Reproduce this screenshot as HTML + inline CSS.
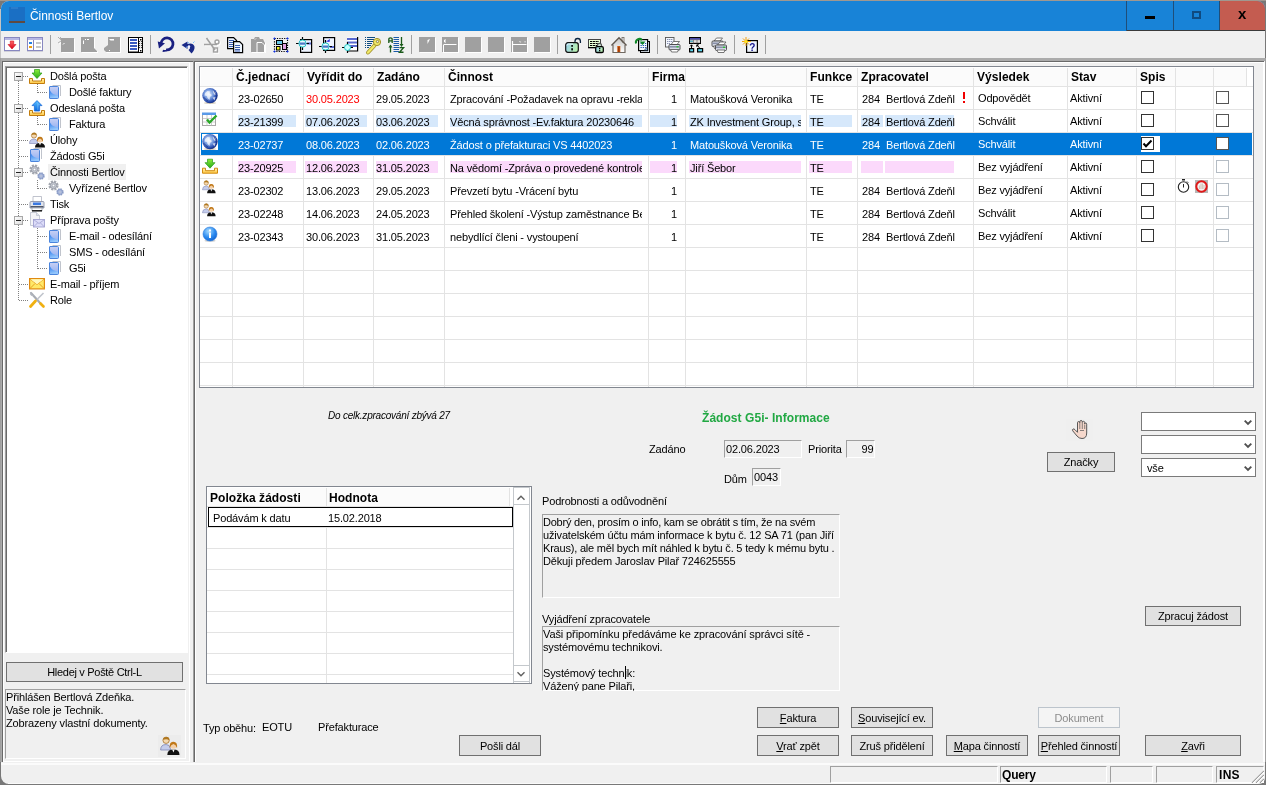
<!DOCTYPE html><html><head><meta charset="utf-8"><title>Činnosti Bertlov</title><style>
*{box-sizing:border-box;margin:0;padding:0}
html,body{width:1266px;height:785px;overflow:hidden}
body{position:relative;background:linear-gradient(#a09890 0,#a09890 1px,#787878 1px);font-family:"Liberation Sans",sans-serif;font-size:11px;color:#000;letter-spacing:-0.15px}
.a{position:absolute}
.t{position:absolute;white-space:nowrap;line-height:13px;height:13px}
.b{font-weight:bold;font-size:12px;letter-spacing:0.05px}
.btn{position:absolute;background:#e1e1e1;border:1px solid #707070;text-align:center;line-height:13px;white-space:nowrap}
.btn span{position:absolute;left:0;right:0;top:3px}
u{text-decoration:underline;text-underline-offset:1px}
.fld{position:absolute;background:#f0f0f0;border:1px solid;border-color:#a0a0a0 #fff #fff #a0a0a0}
.hl{position:absolute;height:1px;background:#e3e3e3}
.vl{position:absolute;width:1px;background:#e3e3e3}
</style></head><body><div id="root" style="position:absolute;left:0;top:0;width:1266px;height:785px;will-change:transform">
<div class="a" style="left:1px;top:1px;width:1264px;height:783px;background:#f0f0f0;border-radius:8px 8px 6px 8px;overflow:hidden"></div>
<div class="a" style="left:8px;top:783px;width:1250px;height:1px;background:#fafafa"></div>
<div class="a" style="left:1px;top:1px;width:1264px;height:30px;background:#1883d7;border-radius:8px 8px 0 0"></div>
<div class="a" style="left:1px;top:58px;width:1264px;height:3px;background:#ababab"></div>
<div class="a" style="left:2px;top:61px;width:1262px;height:1px;background:#696969"></div>
<div class="a" style="left:3px;top:62px;width:1260px;height:1px;background:#fff"></div>
<div class="a" style="left:0px;top:58px;width:1px;height:704px;background:#a0a0a0"></div>
<div class="a" style="left:1px;top:58px;width:1px;height:704px;background:#ababab"></div>
<div class="a" style="left:2px;top:61px;width:1px;height:701px;background:#696969"></div>
<div class="a" style="left:3px;top:62px;width:1px;height:700px;background:#fff"></div>
<div class="a" style="left:1265px;top:58px;width:1px;height:704px;background:#a0a0a0"></div>
<div class="a" style="left:1263px;top:62px;width:2px;height:700px;background:#fff"></div>
<div class="a" style="left:0px;top:9px;width:1px;height:49px;background:#c4c4c4"></div>
<div class="a" style="left:3px;top:761px;width:187px;height:1px;background:#fff"></div>
<svg class="a" style="left:9px;top:6px" width="17" height="18" viewBox="0 0 17 18"><rect x="0" y="1" width="16" height="14" fill="#1a6fc4"/><rect x="0" y="15" width="16" height="2" fill="#5f4a42"/><rect x="2" y="1" width="7" height="2" fill="#2a7ccc"/></svg>
<div class="t" style="left:30px;top:9px;color:#fff;font-size:12px;line-height:15px;height:15px;letter-spacing:-0.05px">Činnosti Bertlov</div>
<div class="a" style="left:1126px;top:1px;width:1px;height:30px;background:#1f4e79"></div>
<div class="a" style="left:1173px;top:1px;width:1px;height:30px;background:#1f4e79"></div>
<div class="a" style="left:1219px;top:1px;width:1px;height:30px;background:#1f4e79"></div>
<div class="a" style="left:1127px;top:30px;width:138px;height:1px;background:#3b3b3b"></div>
<div class="a" style="left:1220px;top:1px;width:45px;height:29px;background:#c45c50;border-radius:0 8px 0 0"></div>
<div class="a" style="left:1145px;top:16px;width:10px;height:3px;background:#000"></div>
<div class="a" style="left:1192px;top:11px;width:9px;height:8px;border:2px solid #0f4a80;background:#1883d7"></div>
<div class="t b" style="left:1238px;top:6px;font-size:15px;line-height:16px;height:16px;letter-spacing:0">x</div>
<div class="a" style="left:50px;top:35px;width:1px;height:19px;background:#a0a0a0"></div>
<div class="a" style="left:150px;top:35px;width:1px;height:19px;background:#a0a0a0"></div>
<div class="a" style="left:411px;top:35px;width:1px;height:19px;background:#a0a0a0"></div>
<div class="a" style="left:557px;top:35px;width:1px;height:19px;background:#a0a0a0"></div>
<div class="a" style="left:657px;top:35px;width:1px;height:19px;background:#a0a0a0"></div>
<div class="a" style="left:734px;top:35px;width:1px;height:19px;background:#a0a0a0"></div>
<div class="a" style="left:765px;top:35px;width:1px;height:19px;background:#a0a0a0"></div>
<svg class="a" style="left:4px;top:37px;overflow:visible" width="16" height="16" viewBox="0 0 16 16"><defs><linearGradient id="ra" x1="0" y1="0" x2="0" y2="1"><stop offset="0" stop-color="#ff6a6a"/><stop offset="1" stop-color="#d80018"/></linearGradient></defs>
<rect x="0" y="14" width="16" height="1" fill="#d0d0d8"/><rect x="0.5" y="0.5" width="15" height="13" fill="#fff" stroke="#8888c0"/><rect x="1" y="1" width="14" height="2" fill="#b8b8e4"/><path d="M6.300 4h3.400v3.500h2.300L8 12 4 7.500h2.300z" fill="url(#ra)" stroke="#d01020" stroke-width="0.6"/></svg>
<svg class="a" style="left:27px;top:37px;overflow:visible" width="16" height="16" viewBox="0 0 16 16"><rect x="0" y="14" width="16" height="1" fill="#d0d0d8"/><rect x="0.5" y="0.5" width="15" height="13" fill="#fff" stroke="#8888c0"/><rect x="1" y="1" width="14" height="2" fill="#b8b8e4"/><rect x="6" y="3" width="1" height="10" fill="#8888c0"/><rect x="2" y="5" width="3" height="2" fill="#2880e0"/><rect x="2" y="9" width="3" height="2" fill="#f0a010"/><rect x="9" y="5" width="5" height="2" fill="#c8c8c8"/><rect x="9" y="9" width="5" height="2" fill="#c8c8c8"/></svg>
<svg class="a" style="left:58px;top:37px;overflow:visible" width="16" height="16" viewBox="0 0 16 16"><g transform="translate(1,1)" fill="#fff" stroke="#fff"><rect x="3" y="1" width="13" height="14" stroke="none"/><path d="M0 0l3 3M0 6l3-2M2.5 0v2" fill="none" stroke-width="0.8"/></g><g fill="#a0a0a0" stroke="#a0a0a0"><rect x="3" y="1" width="13" height="14" stroke="none"/><path d="M0 0l3 3M0 6l3-2M2.5 0v2" fill="none" stroke-width="0.8"/></g><path d="M5 7.5l1.5-1.5" stroke="#fff" stroke-width="1"/></svg>
<svg class="a" style="left:81px;top:37px;overflow:visible" width="16" height="16" viewBox="0 0 16 16"><g transform="translate(1,1)" fill="#fff" stroke="#fff"><path d="M0 0h13v11l3 3v1H0z" stroke="none"/></g><g fill="#a0a0a0" stroke="#a0a0a0"><path d="M0 0h13v11l3 3v1H0z" stroke="none"/></g><path d="M2.5 7v-3.5M4 2.5h1M6 2.5h2" stroke="#fff" stroke-width="1" fill="none"/></svg>
<svg class="a" style="left:104px;top:37px;overflow:visible" width="16" height="16" viewBox="0 0 16 16"><g transform="translate(1,1)" fill="#fff" stroke="#fff"><path d="M4 0h12v15H2l-2-2v-2l4-3z" stroke="none"/></g><g fill="#a0a0a0" stroke="#a0a0a0"><path d="M4 0h12v15H2l-2-2v-2l4-3z" stroke="none"/></g><path d="M5 2h5v1.5H6.5z" fill="#fff"/><rect x="5" y="13" width="1" height="1" fill="#fff"/></svg>
<svg class="a" style="left:127px;top:37px;overflow:visible" width="16" height="16" viewBox="0 0 16 16"><rect x="1.500" y="0.500" width="14" height="15" fill="#fff" stroke="#000"/><rect x="1" y="14.500" width="15" height="1.500" fill="#000"/><g fill="#3a5cc0"><rect x="3" y="2" width="7" height="2"/><rect x="3" y="5" width="7" height="2"/><rect x="3" y="8" width="7" height="2"/><rect x="3" y="11" width="7" height="2"/></g><rect x="11.500" y="0.500" width="4" height="15" fill="#e8e8e8" stroke="#000"/><path d="M12 4.500h3M12 6.500h3M12 8.500h3M12 10.500h3" stroke="#444" stroke-width="1" stroke-dasharray="1,1"/><rect x="12" y="1" width="3" height="3" fill="#fff"/><rect x="12" y="12" width="3" height="3" fill="#fff"/><rect x="13" y="2" width="1.500" height="1.500" fill="#000"/><rect x="13" y="13" width="1.500" height="1.500" fill="#000"/></svg>
<svg class="a" style="left:158px;top:37px;overflow:visible" width="16" height="16" viewBox="0 0 16 16"><path d="M3 7A6 6 0 1 1 8 12.800" fill="none" stroke="#1a2080" stroke-width="2.700"/><path d="M4.500 15Q9 15 12.500 11.500Q9 13.600 5 12.800z" fill="#1a2080"/><path d="M-0.300 4.500l7.300 1.700L1 11.500z" fill="#1a2080"/></svg>
<svg class="a" style="left:181px;top:37px;overflow:visible" width="16" height="16" viewBox="0 0 16 16"><path d="M0.5 8L6.5 4.5V7Q12 5.5 13.5 9.5Q14 13 10.5 16.5L7.5 13Q10 11 8.5 10Q7.5 9.5 6.5 10V12z" fill="#1a2a88"/><path d="M7 5l1 1.5M12 6l1.5-1.5M5 10.5l1.5-1" stroke="#7ac0ff" stroke-width="1"/><circle cx="8" cy="9.5" r="1.2" fill="#eef"/></svg>
<svg class="a" style="left:204px;top:37px;overflow:visible" width="16" height="16" viewBox="0 0 16 16"><g transform="translate(1,1)" fill="#fff" stroke="#fff"><path d="M2.5 1L11 13M0 7.5h13" fill="none" stroke-width="1.6"/><circle cx="13" cy="5" r="2" fill="none" stroke-width="1.4"/><rect x="9.5" y="11" width="4" height="4" fill="none" stroke-width="1.4"/></g><g fill="#a0a0a0" stroke="#a0a0a0"><path d="M2.5 1L11 13M0 7.5h13" fill="none" stroke-width="1.6"/><circle cx="13" cy="5" r="2" fill="none" stroke-width="1.4"/><rect x="9.5" y="11" width="4" height="4" fill="none" stroke-width="1.4"/></g></svg>
<svg class="a" style="left:227px;top:37px;overflow:visible" width="16" height="16" viewBox="0 0 16 16"><path d="M0.6 0.6h6l3 3v8h-9z" fill="#eef6ff" stroke="#000" stroke-width="1.2"/><path d="M2 3.5h5M2 5.5h5M2 7.5h5M2 9.5h5" stroke="#3a5cb0" stroke-width="1"/><path d="M6.6 4.6h6l3 3v8h-9z" fill="#eef6ff" stroke="#000" stroke-width="1.2"/><path d="M8 8.5h5M8 10.5h5M8 12.5h5M8 14h5" stroke="#3a5cb0" stroke-width="1"/></svg>
<svg class="a" style="left:250px;top:37px;overflow:visible" width="16" height="16" viewBox="0 0 16 16"><g transform="translate(1,1)" fill="#fff" stroke="#fff"><path d="M1 2h3l1-2h4l1 2h3l2 4v9H1z" stroke="none"/></g><g fill="#a0a0a0" stroke="#a0a0a0"><path d="M1 2h3l1-2h4l1 2h3l2 4v9H1z" stroke="none"/></g><path d="M7 5.5h5l2.5 2.5v7.5H7z" fill="#a0a0a0" stroke="#fff" stroke-width="1"/><path d="M5 2.5l1-1" stroke="#fff"/></svg>
<svg class="a" style="left:273px;top:37px;overflow:visible" width="16" height="16" viewBox="0 0 16 16"><rect x="1.5" y="1.5" width="13" height="13" fill="none" stroke="#000" stroke-width="1.2" stroke-dasharray="1.2,1.2"/><g fill="#1030e0"><path d="M1.500 0.200l1.300 1.300-1.300 1.300-1.300-1.300z"/><path d="M14.500 0.200l1.300 1.300-1.300 1.300-1.300-1.300z"/><path d="M1.500 13.200l1.300 1.300-1.300 1.300-1.300-1.300z"/><path d="M14.500 13.200l1.300 1.300-1.300 1.300-1.300-1.300z"/></g><rect x="3.5" y="3.5" width="6" height="4" fill="#68c8e8" stroke="#000"/><rect x="9.5" y="6.5" width="4" height="6" fill="#e0a0e0" stroke="#000"/><rect x="3.5" y="9.5" width="3.5" height="3.5" fill="#f0f020" stroke="#000"/></svg>
<svg class="a" style="left:296px;top:37px;overflow:visible" width="16" height="16" viewBox="0 0 16 16"><rect x="4.6" y="2.6" width="11" height="12.8" fill="#eef4ff" stroke="#000" stroke-width="1.2"/><rect x="11" y="5.5" width="4" height="2" fill="#5a6ad0"/><path d="M6.5 0v13M0 6.5h13" stroke="#000" stroke-width="1.2"/><circle cx="6.5" cy="6.5" r="3.6" fill="#e8ffff" stroke="#20c8c8" stroke-width="1"/><rect x="3.5" y="5.5" width="6" height="2.2" fill="#4a78c8"/></svg>
<svg class="a" style="left:319px;top:37px;overflow:visible" width="16" height="16" viewBox="0 0 16 16"><rect x="4.6" y="0.6" width="11" height="12.8" fill="#eef4ff" stroke="#000" stroke-width="1.2"/><rect x="11" y="9" width="4" height="2" fill="#5a6ad0"/><path d="M7 4.5l4-2.5-0.5 3z" fill="#3030e0"/><path d="M6.5 3v13M0 9.5h13" stroke="#000" stroke-width="1.2"/><circle cx="6.5" cy="9.5" r="3.6" fill="#e8ffff" stroke="#20c8c8" stroke-width="1"/><rect x="3.5" y="8.5" width="6" height="2.2" fill="#4a78c8"/></svg>
<svg class="a" style="left:342px;top:37px;overflow:visible" width="16" height="16" viewBox="0 0 16 16"><rect x="5" y="0.5" width="10.5" height="13" fill="#fff"/><path d="M15.6 0v14H5" fill="none" stroke="#000" stroke-width="1.2"/><g fill="#5a6ad0"><rect x="5" y="1" width="10" height="2"/><rect x="5" y="4.5" width="10" height="2"/><rect x="5" y="8" width="10" height="2"/></g><path d="M5.5 5v11M0 10.5h11" stroke="#000" stroke-width="1.2"/><circle cx="5.5" cy="10.5" r="3" fill="#c8ffff" stroke="#20c8c8"/></svg>
<svg class="a" style="left:365px;top:37px;overflow:visible" width="16" height="16" viewBox="0 0 16 16"><path d="M0.5 0v11" stroke="#104a80" stroke-width="1" stroke-dasharray="1,1"/><path d="M2 0.500h8M2 2.500h7M2 4.500h6M2 6.500h5M2 8.500h4M2 10.500h2" stroke="#104a80" stroke-width="1"/><path d="M3 15.5L9.5 8.5" stroke="#a09028" stroke-width="4" stroke-linecap="round"/><path d="M3 15.5L9.5 8.5" stroke="#f0e868" stroke-width="2.4" stroke-linecap="round"/><circle cx="12" cy="5" r="3.6" fill="#f0e868" stroke="#a09028" stroke-width="1"/><circle cx="12.5" cy="4.5" r="1.2" fill="#eee" stroke="#807020" stroke-width="0.8"/></svg>
<svg class="a" style="left:388px;top:37px;overflow:visible" width="16" height="16" viewBox="0 0 16 16"><g stroke="#1a5a1a" fill="none" stroke-width="1.3"><path d="M0.8 6V2.5Q0.8 0.8 2.5 0.8Q4.2 0.8 4.2 2.5V6M0.8 3.8h3.4"/><path d="M2.5 15.5V8.5"/><path d="M13.5 0v8"/><path d="M11.5 10.6h4l-4 4.6h4" stroke-width="1.4"/></g><path d="M0.5 10.5l2-3 2 3z" fill="#1a5a1a"/><path d="M11.5 7l2 3 2-3z" fill="#1a5a1a"/><path d="M5.5 0.5h5.5M5.5 2.5h5.5M5.5 4.5h5.5M5.5 6.5h5.5M5.5 8.5h5.5M5.5 10.5h5.5M5.5 12.5h5.5M5.5 14.5h5.5" stroke="#1a5aa8" stroke-width="1"/></svg>
<svg class="a" style="left:419px;top:37px;overflow:visible" width="16" height="16" viewBox="0 0 16 16"><rect x="1" y="1" width="16" height="15" fill="#fff"/><rect x="0" y="0" width="16" height="15" fill="#a0a0a0"/><path d="M8.5 3v4l2.5-5z" fill="#fff"/></svg>
<svg class="a" style="left:442px;top:37px;overflow:visible" width="16" height="16" viewBox="0 0 16 16"><rect x="1" y="1" width="16" height="15" fill="#fff"/><rect x="0" y="0" width="16" height="15" fill="#a0a0a0"/><path d="M1.5 15V8M1.5 7.5h13" stroke="#fff" stroke-width="1" fill="none"/><path d="M4 3H2.5v2H4" stroke="#fff" stroke-width="1" fill="none"/></svg>
<svg class="a" style="left:465px;top:37px;overflow:visible" width="16" height="16" viewBox="0 0 16 16"><rect x="1" y="1" width="16" height="15" fill="#fff"/><rect x="0" y="0" width="16" height="15" fill="#a0a0a0"/></svg>
<svg class="a" style="left:488px;top:37px;overflow:visible" width="16" height="16" viewBox="0 0 16 16"><rect x="1" y="1" width="16" height="15" fill="#fff"/><rect x="0" y="0" width="16" height="15" fill="#a0a0a0"/></svg>
<svg class="a" style="left:511px;top:37px;overflow:visible" width="16" height="16" viewBox="0 0 16 16"><rect x="1" y="1" width="16" height="15" fill="#fff"/><rect x="0" y="0" width="16" height="15" fill="#a0a0a0"/><path d="M1.5 15V4M1.5 7.5h14" stroke="#fff" stroke-width="1.2" fill="none"/><path d="M8 4l1 1.5 1.5-0.5zM13 5l1.5-1v1.5z" fill="#fff"/></svg>
<svg class="a" style="left:534px;top:37px;overflow:visible" width="16" height="16" viewBox="0 0 16 16"><rect x="1" y="1" width="16" height="15" fill="#fff"/><rect x="0" y="0" width="16" height="15" fill="#a0a0a0"/></svg>
<svg class="a" style="left:565px;top:37px;overflow:visible" width="16" height="16" viewBox="0 0 16 16"><defs><linearGradient id="pg1" x1="0" y1="0" x2="1" y2="0.3"><stop offset="0" stop-color="#98d0f0"/><stop offset="1" stop-color="#b8f0b0"/></linearGradient></defs><path d="M10 7V4.200A2.700 2.700 0 0 1 15.400 4.200V6" fill="none" stroke="#0a2440" stroke-width="1.300"/><rect x="0.700" y="5.700" width="12.600" height="9.600" rx="2.200" fill="url(#pg1)" stroke="#111" stroke-width="1.200"/><path d="M2 8.500Q2 7 3.500 7H8" stroke="#e8f8ff" stroke-width="1" fill="none"/><rect x="6.300" y="8" width="1.600" height="1.800" fill="#000"/><rect x="6.300" y="11.200" width="1.600" height="2.200" fill="#000"/></svg>
<svg class="a" style="left:588px;top:37px;overflow:visible" width="16" height="16" viewBox="0 0 16 16"><defs><linearGradient id="pg2" x1="0" y1="0" x2="1" y2="0.3"><stop offset="0" stop-color="#98d0f0"/><stop offset="1" stop-color="#b8f0b0"/></linearGradient></defs><rect x="0.5" y="2.5" width="12" height="8" fill="#e8ffd8" stroke="#444" stroke-width="1"/><rect x="0" y="10" width="9" height="1.3" fill="#000"/><path d="M2 4.5h9M2 6.5h9M2 8.5h7" stroke="#000" stroke-width="1.2" stroke-dasharray="2.2,0.6"/><path d="M9.5 10V8.3A2 2 0 0 1 13.5 8.3V10" fill="#cfe8d8" stroke="#555" stroke-width="1.2"/><rect x="7.7" y="9.7" width="7.6" height="5.8" rx="1.3" fill="url(#pg2)" stroke="#000" stroke-width="1.3"/><rect x="11" y="10.8" width="1.3" height="1.3" fill="#000"/><rect x="11" y="12.8" width="1.3" height="1.5" fill="#000"/></svg>
<svg class="a" style="left:611px;top:37px;overflow:visible" width="16" height="16" viewBox="0 0 16 16"><defs><linearGradient id="hg" x1="0" y1="0" x2="0" y2="1"><stop offset="0" stop-color="#c8c8c8"/><stop offset="1" stop-color="#fff"/></linearGradient></defs><rect x="11" y="0.5" width="2" height="5" fill="#eee" stroke="#706860" stroke-width="0.8"/><path d="M2 8.5L8 1.5l6 7V15.5H2z" fill="url(#hg)"/><path d="M0.5 8.5L8 0.8l7.5 7.7" fill="none" stroke="#605850" stroke-width="1.5"/><path d="M2 8v7.5h12V8" fill="none" stroke="#706860" stroke-width="1.2"/><rect x="6.3" y="9" width="3" height="6" fill="#d05a10"/><rect x="7" y="10" width="1.5" height="5" fill="#a03c08"/></svg>
<svg class="a" style="left:634px;top:37px;overflow:visible" width="16" height="16" viewBox="0 0 16 16"><rect x="6.5" y="4.5" width="9" height="11" fill="#eaf4ff" stroke="#000" stroke-width="1"/><rect x="4.6" y="2.6" width="9" height="11" fill="#f4faff" stroke="#000" stroke-width="1.2"/><path d="M6.5 6.5h6M6.5 8.5h6M6.5 10.5h6" stroke="#2858b0" stroke-width="1.2" stroke-dasharray="1.3,0.9"/><path d="M10 13.5l3.5-3.5v3.5z" fill="#88b8e8" stroke="#000" stroke-width="0.6"/><path d="M2 6.5A3.6 3.6 0 0 1 8 3" fill="none" stroke="#108828" stroke-width="2"/><path d="M5.5 4.5h6L8.5 8z" fill="#108828"/></svg>
<svg class="a" style="left:665px;top:37px;overflow:visible" width="16" height="16" viewBox="0 0 16 16"><rect x="0.5" y="0.5" width="8.5" height="9.5" fill="#f4f8ff" stroke="#555" stroke-width="0.9"/><path d="M2 2.5h6M2 4.5h6M2 6.5h3" stroke="#8890b0" stroke-width="1" stroke-dasharray="1.4,0.6"/><g transform="translate(3.5,4)"><path d="M2.5 3.5L5 0.5h6L8.5 3.5z" fill="#fff" stroke="#555" stroke-width="0.8"/><path d="M0.5 4.5Q0.5 3.5 1.5 3.5h9Q11.5 3.5 11.5 4.5V8Q11.5 9 10.5 9h-9Q0.5 9 0.5 8z" fill="#d8dce8" stroke="#444" stroke-width="0.9"/><rect x="1" y="5" width="10" height="1.6" fill="#8890a8"/><rect x="8" y="5.2" width="2" height="1.2" fill="#20d020"/><path d="M2 8.5h8L9 11H3z" fill="#fff" stroke="#555" stroke-width="0.8"/></g></svg>
<svg class="a" style="left:688px;top:37px;overflow:visible" width="16" height="16" viewBox="0 0 16 16"><rect x="1.5" y="0.5" width="11" height="6" fill="#fff" stroke="#000" stroke-width="1"/><rect x="2" y="1" width="10" height="1.8" fill="#4848a8"/><rect x="2" y="3.5" width="3" height="1.5" fill="#58c8e0"/><path d="M1.5 3h11M1.500 5.200h11M5.500 3v3.500M9 3v3.500" stroke="#555" stroke-width="0.6"/><rect x="1.600" y="11.600" width="4" height="3.300" fill="#60d8f0" stroke="#000" stroke-width="1.200"/><rect x="9.600" y="11.600" width="5" height="3.300" fill="#60d8f0" stroke="#000" stroke-width="1.200"/><path d="M3.500 11.500V8M2.300 9.300l1.200-1.500 1.200 1.500M12 11.500L9 8M8.800 9.800V7.800h2" fill="none" stroke="#000" stroke-width="1"/></svg>
<svg class="a" style="left:711px;top:37px;overflow:visible" width="16" height="16" viewBox="0 0 16 16"><g transform="translate(0.5,0.5)"><path d="M2.5 3.5L5 0.5h6L8.5 3.5z" fill="#fff" stroke="#555" stroke-width="0.8"/><path d="M0.5 4.5Q0.5 3.5 1.5 3.5h9Q11.5 3.5 11.5 4.5V8Q11.5 9 10.5 9h-9Q0.5 9 0.5 8z" fill="#d8dce8" stroke="#444" stroke-width="0.9"/><rect x="1" y="5" width="10" height="1.6" fill="#8890a8"/><rect x="8" y="5.2" width="2" height="1.2" fill="#20d020"/><path d="M2 8.5h8L9 11H3z" fill="#fff" stroke="#555" stroke-width="0.8"/></g><g transform="translate(4,4.5)"><path d="M2.5 3.5L5 0.5h6L8.5 3.5z" fill="#fff" stroke="#555" stroke-width="0.8"/><path d="M0.5 4.5Q0.5 3.5 1.5 3.5h9Q11.5 3.5 11.5 4.5V8Q11.5 9 10.5 9h-9Q0.5 9 0.5 8z" fill="#d8dce8" stroke="#444" stroke-width="0.9"/><rect x="1" y="5" width="10" height="1.6" fill="#8890a8"/><rect x="8" y="5.2" width="2" height="1.2" fill="#20d020"/><path d="M2 8.5h8L9 11H3z" fill="#fff" stroke="#555" stroke-width="0.8"/></g></svg>
<svg class="a" style="left:742px;top:37px;overflow:visible" width="16" height="16" viewBox="0 0 16 16"><rect x="4.600" y="3.600" width="10.800" height="11.800" fill="#f0f6ff" stroke="#000" stroke-width="1.200"/><path d="M4 0v9M0 4.500h9M1 1.500l6 6M7 1.500l-6 6" stroke="#f0a010" stroke-width="1"/><circle cx="4" cy="4.500" r="1.600" fill="#ffe820"/><text x="7.300" y="13.500" font-family="Liberation Sans" font-weight="bold" font-size="10" fill="#10108a">?</text></svg>
<div class="a" style="left:5px;top:66px;width:183px;height:587px;background:#fff;border:1px solid;border-color:#a0a0a0 #fff #fff #a0a0a0;box-shadow:inset 1px 1px 0 #696969"></div>
<div class="a" style="left:189px;top:62px;width:1px;height:700px;background:#fff"></div>
<div class="a" style="left:190px;top:62px;width:3px;height:700px;background:#f0f0f0"></div>
<div class="a" style="left:193px;top:61px;width:1px;height:701px;background:#a0a0a0"></div>
<div class="a" style="left:194px;top:61px;width:1px;height:701px;background:#696969"></div>
<div class="a" style="left:195px;top:62px;width:1px;height:700px;background:#fff"></div>
<svg width="0" height="0" style="position:absolute"><defs>
<linearGradient id="docg" x1="0" y1="0" x2="0.300" y2="1"><stop offset="0" stop-color="#2e7eee"/><stop offset="1" stop-color="#96c8fc"/></linearGradient><linearGradient id="docp" x1="0" y1="0" x2="0" y2="1"><stop offset="0" stop-color="#c8d0f4"/><stop offset="1" stop-color="#8cacf0"/></linearGradient>
<linearGradient id="grn" x1="0" y1="0" x2="0" y2="1"><stop offset="0" stop-color="#8aee3a"/><stop offset="1" stop-color="#28a818"/></linearGradient>
<linearGradient id="blu" x1="0" y1="0" x2="0" y2="1"><stop offset="0" stop-color="#58c0ff"/><stop offset="1" stop-color="#0868e0"/></linearGradient>
<linearGradient id="tray" x1="0" y1="0" x2="0" y2="1"><stop offset="0" stop-color="#fff0b0"/><stop offset="1" stop-color="#ffc840"/></linearGradient>
</defs></svg>
<div class="a" style="left:18px;top:81px;width:1px;height:220px;background-image:repeating-linear-gradient(180deg,#808080 0,#808080 1px,transparent 1px,transparent 2px)"></div>
<div class="t " style="left:50px;top:70px;">Došlá pošta</div>
<div class="a" style="left:23px;top:76px;width:5px;height:1px;background-image:repeating-linear-gradient(90deg,#808080 0,#808080 1px,transparent 1px,transparent 2px)"></div>
<div class="a" style="left:14px;top:72px;width:9px;height:9px;background:linear-gradient(135deg,#fff,#dcdcdc);border:1px solid #a8a8a8"></div>
<div class="a" style="left:16px;top:76px;width:5px;height:1px;background:#222"></div>
<svg class="a" style="left:29px;top:68px;overflow:visible" width="16" height="16" viewBox="0 0 16 16"><path d="M0.500 10.500h3v2.500h9v-2.500h3v5h-15z" fill="url(#tray)" stroke="#c27c0c" stroke-width="1"/><path d="M5.500 1.500h5v3.500h2.500l-5 5.500-5-5.500h2.500z" fill="url(#grn)" stroke="#2a9a18" stroke-width="0.700"/></svg>
<div class="t " style="left:69px;top:86px;">Došlé faktury</div>
<div class="a" style="left:38px;top:92px;width:10px;height:1px;background-image:repeating-linear-gradient(90deg,#808080 0,#808080 1px,transparent 1px,transparent 2px)"></div>
<svg class="a" style="left:49px;top:85px;overflow:visible" width="12" height="15" viewBox="0 0 12 15"><path d="M3.500 0.500h8v10.500" fill="#fff" stroke="#c0c4cc"/><path d="M0.500 2q0-0.500 0.500-0.500h7.500q1 0 1 1v10q0 1-1 1h-7.500q-0.500 0-0.500-0.500z" fill="url(#docp)" stroke="#4a84dc" stroke-width="1"/><path d="M1 5.500Q2.500 9.500 9 10.500V13H1z" fill="url(#docg)"/></svg>
<div class="t " style="left:50px;top:102px;">Odeslaná pošta</div>
<div class="a" style="left:23px;top:108px;width:5px;height:1px;background-image:repeating-linear-gradient(90deg,#808080 0,#808080 1px,transparent 1px,transparent 2px)"></div>
<div class="a" style="left:14px;top:104px;width:9px;height:9px;background:linear-gradient(135deg,#fff,#dcdcdc);border:1px solid #a8a8a8"></div>
<div class="a" style="left:16px;top:108px;width:5px;height:1px;background:#222"></div>
<svg class="a" style="left:29px;top:100px;overflow:visible" width="16" height="16" viewBox="0 0 16 16"><path d="M0.500 10.500h3v2.500h9v-2.500h3v5h-15z" fill="url(#tray)" stroke="#c27c0c" stroke-width="1"/><path d="M8 0.600L13 5.600H10.600V11H5.400V5.600H3z" fill="url(#blu)" stroke="#1a6ad8" stroke-width="0.800"/><path d="M8 2L11 5H9.500V10H8z" fill="#fff" opacity="0.180"/></svg>
<div class="t " style="left:69px;top:118px;">Faktura</div>
<div class="a" style="left:38px;top:124px;width:10px;height:1px;background-image:repeating-linear-gradient(90deg,#808080 0,#808080 1px,transparent 1px,transparent 2px)"></div>
<svg class="a" style="left:49px;top:117px;overflow:visible" width="12" height="15" viewBox="0 0 12 15"><path d="M3.500 0.500h8v10.500" fill="#fff" stroke="#c0c4cc"/><path d="M0.500 2q0-0.500 0.500-0.500h7.500q1 0 1 1v10q0 1-1 1h-7.500q-0.500 0-0.500-0.500z" fill="url(#docp)" stroke="#4a84dc" stroke-width="1"/><path d="M1 5.500Q2.500 9.500 9 10.500V13H1z" fill="url(#docg)"/></svg>
<div class="t " style="left:50px;top:134px;">Úlohy</div>
<div class="a" style="left:19px;top:140px;width:9px;height:1px;background-image:repeating-linear-gradient(90deg,#808080 0,#808080 1px,transparent 1px,transparent 2px)"></div>
<svg class="a" style="left:29px;top:132px;overflow:visible" width="16" height="16" viewBox="0 0 16 16"><circle cx="5" cy="3.500" r="2.600" fill="#f4d8b0" stroke="#a06820" stroke-width="0.600"/><path d="M2.500 3Q3 0.300 6 0.800Q8 1.500 7.500 3.500Q6 2 2.500 3z" fill="#b07820"/><path d="M0.500 11.500Q0.500 7 5 7Q8 7 8.500 10v1.500z" fill="#c4ccec" stroke="#7880b0" stroke-width="0.600"/><circle cx="11" cy="8" r="2.500" fill="#f4d0a8"/><path d="M8 10Q7.500 4.500 11 4.800Q14.500 4.800 14 10Q13 7 11 6.500Q9 7 8 10z" fill="#c07818"/><path d="M6 15.500Q6 11 11 11Q16 11 16 15.500z" fill="#101010"/><path d="M10 11l1 2.500 1-2.500z" fill="#fff"/></svg>
<div class="t " style="left:50px;top:150px;">Žádosti G5i</div>
<div class="a" style="left:19px;top:156px;width:9px;height:1px;background-image:repeating-linear-gradient(90deg,#808080 0,#808080 1px,transparent 1px,transparent 2px)"></div>
<svg class="a" style="left:30px;top:148px;overflow:visible" width="12" height="15" viewBox="0 0 12 15"><path d="M3.500 0.500h8v10.500" fill="#fff" stroke="#c0c4cc"/><path d="M0.500 2q0-0.500 0.500-0.500h7.500q1 0 1 1v10q0 1-1 1h-7.500q-0.500 0-0.500-0.500z" fill="url(#docp)" stroke="#4a84dc" stroke-width="1"/><path d="M1 5.500Q2.500 9.500 9 10.500V13H1z" fill="url(#docg)"/></svg>
<div class="a" style="left:48px;top:164px;width:78px;height:16px;background:#f0f0f0"></div>
<div class="t " style="left:50px;top:166px;">Činnosti Bertlov</div>
<div class="a" style="left:23px;top:172px;width:5px;height:1px;background-image:repeating-linear-gradient(90deg,#808080 0,#808080 1px,transparent 1px,transparent 2px)"></div>
<div class="a" style="left:14px;top:168px;width:9px;height:9px;background:linear-gradient(135deg,#fff,#dcdcdc);border:1px solid #a8a8a8"></div>
<div class="a" style="left:16px;top:172px;width:5px;height:1px;background:#222"></div>
<svg class="a" style="left:29px;top:164px;overflow:visible" width="16" height="16" viewBox="0 0 16 16"><circle cx="5.500" cy="5.500" r="3.600" fill="none" stroke="#a4a8b0" stroke-width="3" stroke-dasharray="1.900,0.930"/><circle cx="5.500" cy="5.500" r="3.200" fill="#c4c8d0" stroke="#9498a4" stroke-width="0.800"/><circle cx="5.500" cy="5.500" r="1.300" fill="#fff" stroke="#8890a0" stroke-width="0.600"/><circle cx="12" cy="12" r="2.600" fill="none" stroke="#8ea0c8" stroke-width="2.200" stroke-dasharray="1.400,0.640"/><circle cx="12" cy="12" r="2.400" fill="#b8c8e8" stroke="#8090c0" stroke-width="0.800"/><circle cx="12" cy="12" r="1" fill="#fff" stroke="#7080b0" stroke-width="0.500"/></svg>
<div class="t " style="left:69px;top:182px;">Vyřízené Bertlov</div>
<div class="a" style="left:38px;top:188px;width:10px;height:1px;background-image:repeating-linear-gradient(90deg,#808080 0,#808080 1px,transparent 1px,transparent 2px)"></div>
<svg class="a" style="left:48px;top:180px;overflow:visible" width="16" height="16" viewBox="0 0 16 16"><circle cx="5.500" cy="5.500" r="3.600" fill="none" stroke="#a4a8b0" stroke-width="3" stroke-dasharray="1.900,0.930"/><circle cx="5.500" cy="5.500" r="3.200" fill="#c4c8d0" stroke="#9498a4" stroke-width="0.800"/><circle cx="5.500" cy="5.500" r="1.300" fill="#fff" stroke="#8890a0" stroke-width="0.600"/><circle cx="12" cy="12" r="2.600" fill="none" stroke="#8ea0c8" stroke-width="2.200" stroke-dasharray="1.400,0.640"/><circle cx="12" cy="12" r="2.400" fill="#b8c8e8" stroke="#8090c0" stroke-width="0.800"/><circle cx="12" cy="12" r="1" fill="#fff" stroke="#7080b0" stroke-width="0.500"/></svg>
<div class="t " style="left:50px;top:198px;">Tisk</div>
<div class="a" style="left:19px;top:204px;width:9px;height:1px;background-image:repeating-linear-gradient(90deg,#808080 0,#808080 1px,transparent 1px,transparent 2px)"></div>
<svg class="a" style="left:29px;top:196px;overflow:visible" width="16" height="16" viewBox="0 0 16 16"><path d="M4 0.500h8.500v6h-8.500z" fill="#fff" stroke="#b0b4c0" stroke-width="0.800"/><path d="M1 6.500q0-1 1-1h12q1 0 1 1v5.500h-14z" fill="#e0e4ec" stroke="#8088a0" stroke-width="0.800"/><rect x="4" y="6.500" width="8" height="2.500" fill="#3a78e0"/><rect x="1.500" y="10" width="13" height="1.500" fill="#505868"/><path d="M3 12h10v3h-10z" fill="#fff" stroke="#a0a4b0" stroke-width="0.800"/><rect x="3" y="14" width="10" height="1.500" fill="#222"/></svg>
<div class="t " style="left:50px;top:214px;">Příprava pošty</div>
<div class="a" style="left:23px;top:220px;width:5px;height:1px;background-image:repeating-linear-gradient(90deg,#808080 0,#808080 1px,transparent 1px,transparent 2px)"></div>
<div class="a" style="left:14px;top:216px;width:9px;height:9px;background:linear-gradient(135deg,#fff,#dcdcdc);border:1px solid #a8a8a8"></div>
<div class="a" style="left:16px;top:220px;width:5px;height:1px;background:#222"></div>
<svg class="a" style="left:29px;top:212px;overflow:visible" width="16" height="16" viewBox="0 0 16 16"><path d="M1.500 0.500h6l3 3v10h-9z" fill="#f4f4f8" stroke="#c0c4d0" stroke-width="0.900"/><path d="M7.500 0.500v3h3" fill="#e0e4f0" stroke="#c0c4d0" stroke-width="0.800"/><rect x="4.500" y="7.500" width="11" height="7.500" fill="#dcdcf8" stroke="#a0a0d0" stroke-width="0.900"/><path d="M4.500 7.500l5.500 4 5.500-4M4.500 15l4-4M15.500 15l-4-4" fill="none" stroke="#a0a0d0" stroke-width="0.800"/></svg>
<div class="t " style="left:69px;top:230px;">E-mail - odesílání</div>
<div class="a" style="left:38px;top:236px;width:10px;height:1px;background-image:repeating-linear-gradient(90deg,#808080 0,#808080 1px,transparent 1px,transparent 2px)"></div>
<svg class="a" style="left:49px;top:229px;overflow:visible" width="12" height="15" viewBox="0 0 12 15"><path d="M3.500 0.500h8v10.500" fill="#fff" stroke="#c0c4cc"/><path d="M0.500 2q0-0.500 0.500-0.500h7.500q1 0 1 1v10q0 1-1 1h-7.500q-0.500 0-0.500-0.500z" fill="url(#docp)" stroke="#4a84dc" stroke-width="1"/><path d="M1 5.500Q2.500 9.500 9 10.500V13H1z" fill="url(#docg)"/></svg>
<div class="t " style="left:69px;top:246px;">SMS - odesílání</div>
<div class="a" style="left:38px;top:252px;width:10px;height:1px;background-image:repeating-linear-gradient(90deg,#808080 0,#808080 1px,transparent 1px,transparent 2px)"></div>
<svg class="a" style="left:49px;top:245px;overflow:visible" width="12" height="15" viewBox="0 0 12 15"><path d="M3.500 0.500h8v10.500" fill="#fff" stroke="#c0c4cc"/><path d="M0.500 2q0-0.500 0.500-0.500h7.500q1 0 1 1v10q0 1-1 1h-7.500q-0.500 0-0.500-0.500z" fill="url(#docp)" stroke="#4a84dc" stroke-width="1"/><path d="M1 5.500Q2.500 9.500 9 10.500V13H1z" fill="url(#docg)"/></svg>
<div class="t " style="left:69px;top:262px;">G5i</div>
<div class="a" style="left:38px;top:268px;width:10px;height:1px;background-image:repeating-linear-gradient(90deg,#808080 0,#808080 1px,transparent 1px,transparent 2px)"></div>
<svg class="a" style="left:49px;top:261px;overflow:visible" width="12" height="15" viewBox="0 0 12 15"><path d="M3.500 0.500h8v10.500" fill="#fff" stroke="#c0c4cc"/><path d="M0.500 2q0-0.500 0.500-0.500h7.500q1 0 1 1v10q0 1-1 1h-7.500q-0.500 0-0.500-0.500z" fill="url(#docp)" stroke="#4a84dc" stroke-width="1"/><path d="M1 5.500Q2.500 9.500 9 10.500V13H1z" fill="url(#docg)"/></svg>
<div class="t " style="left:50px;top:278px;">E-mail - příjem</div>
<div class="a" style="left:19px;top:284px;width:9px;height:1px;background-image:repeating-linear-gradient(90deg,#808080 0,#808080 1px,transparent 1px,transparent 2px)"></div>
<svg class="a" style="left:29px;top:276px;overflow:visible" width="16" height="16" viewBox="0 0 16 16"><rect x="0.600" y="2.600" width="14.800" height="10.300" fill="#ffe868" stroke="#e08a10" stroke-width="1.200"/><path d="M1 3l7 5.500 7-5.500M1 12.500l5-5M15 12.500l-5-5" fill="none" stroke="#e8a020" stroke-width="1"/><path d="M1.500 3.200l6.500 5 6.500-5z" fill="#fff8c0"/></svg>
<div class="t " style="left:50px;top:294px;">Role</div>
<div class="a" style="left:19px;top:300px;width:9px;height:1px;background-image:repeating-linear-gradient(90deg,#808080 0,#808080 1px,transparent 1px,transparent 2px)"></div>
<svg class="a" style="left:29px;top:292px;overflow:visible" width="16" height="16" viewBox="0 0 16 16"><path d="M2 1l10 11" stroke="#a8acb4" stroke-width="2.200" stroke-linecap="round"/><path d="M1 2.500Q0.500 0.500 3 0.500L2 2l1.500 1.200L5 2Q5 4.500 2.500 4z" fill="#b8bcc4"/><path d="M14.500 1L8 7.500" stroke="#c0c4cc" stroke-width="1.600"/><path d="M6.500 9l-5 5.500" stroke="#f0b010" stroke-width="2.800" stroke-linecap="round"/><path d="M11.500 11.500l3 3" stroke="#f0b010" stroke-width="2.600" stroke-linecap="round"/></svg>
<div class="a" style="left:37px;top:84px;width:1px;height:9px;background-image:repeating-linear-gradient(180deg,#808080 0,#808080 1px,transparent 1px,transparent 2px)"></div>
<div class="a" style="left:37px;top:116px;width:1px;height:9px;background-image:repeating-linear-gradient(180deg,#808080 0,#808080 1px,transparent 1px,transparent 2px)"></div>
<div class="a" style="left:37px;top:180px;width:1px;height:9px;background-image:repeating-linear-gradient(180deg,#808080 0,#808080 1px,transparent 1px,transparent 2px)"></div>
<div class="a" style="left:37px;top:228px;width:1px;height:41px;background-image:repeating-linear-gradient(180deg,#808080 0,#808080 1px,transparent 1px,transparent 2px)"></div>
<div class="btn" style="left:6px;top:662px;width:177px;height:20px;letter-spacing:-0.3px"><span style="top:3px">Hledej v Poště Ctrl-L</span></div>
<div class="a" style="left:5px;top:689px;width:181px;height:70px;border:1px solid;border-color:#a0a0a0 #fff #fff #a0a0a0"></div>
<div class="t " style="left:6px;top:691px;">Přihlášen Bertlová Zdeňka.</div>
<div class="t " style="left:6px;top:704px;">Vaše role je Technik.</div>
<div class="t " style="left:6px;top:717px;">Zobrazeny vlastní dokumenty.</div>
<div class="a" style="left:158px;top:735px;width:23px;height:22px;background:#ececec"></div>
<svg class="a" style="left:160px;top:736px;overflow:visible" width="16" height="16" viewBox="0 0 16 16"><g transform="scale(1.220)"><circle cx="5" cy="3.500" r="2.600" fill="#f4d8b0" stroke="#a06820" stroke-width="0.600"/><path d="M2.500 3Q3 0.300 6 0.800Q8 1.500 7.500 3.500Q6 2 2.500 3z" fill="#b07820"/><path d="M0.500 11.500Q0.500 7 5 7Q8 7 8.500 10v1.500z" fill="#c4ccec" stroke="#7880b0" stroke-width="0.600"/><circle cx="11" cy="8" r="2.500" fill="#f4d0a8"/><path d="M8 10Q7.500 4.500 11 4.800Q14.500 4.800 14 10Q13 7 11 6.500Q9 7 8 10z" fill="#c07818"/><path d="M6 15.500Q6 11 11 11Q16 11 16 15.500z" fill="#101010"/><path d="M10 11l1 2.500 1-2.500z" fill="#fff"/></g></svg>
<div class="a" style="left:199px;top:66px;width:1055px;height:322px;background:#fff;border:1px solid #828790"></div>
<div class="a" style="left:201px;top:68px;width:1045px;height:18px;background:#fbfbfb"></div>
<div class="a" style="left:232px;top:68px;width:1px;height:319px;background:#e3e3e3"></div>
<div class="a" style="left:303px;top:68px;width:1px;height:319px;background:#e3e3e3"></div>
<div class="a" style="left:373px;top:68px;width:1px;height:319px;background:#e3e3e3"></div>
<div class="a" style="left:444px;top:68px;width:1px;height:319px;background:#e3e3e3"></div>
<div class="a" style="left:648px;top:68px;width:1px;height:319px;background:#e3e3e3"></div>
<div class="a" style="left:685px;top:68px;width:1px;height:319px;background:#e3e3e3"></div>
<div class="a" style="left:806px;top:68px;width:1px;height:319px;background:#e3e3e3"></div>
<div class="a" style="left:857px;top:68px;width:1px;height:319px;background:#e3e3e3"></div>
<div class="a" style="left:973px;top:68px;width:1px;height:319px;background:#e3e3e3"></div>
<div class="a" style="left:1067px;top:68px;width:1px;height:319px;background:#e3e3e3"></div>
<div class="a" style="left:1136px;top:68px;width:1px;height:319px;background:#e3e3e3"></div>
<div class="a" style="left:1175px;top:68px;width:1px;height:319px;background:#e3e3e3"></div>
<div class="a" style="left:1213px;top:68px;width:1px;height:319px;background:#e3e3e3"></div>
<div class="a" style="left:1246px;top:68px;width:1px;height:18px;background:#e3e3e3"></div>
<div class="a" style="left:200px;top:86px;width:1053px;height:1px;background:#e3e3e3"></div>
<div class="a" style="left:200px;top:109px;width:1053px;height:1px;background:#e3e3e3"></div>
<div class="a" style="left:200px;top:132px;width:1053px;height:1px;background:#e3e3e3"></div>
<div class="a" style="left:200px;top:155px;width:1053px;height:1px;background:#e3e3e3"></div>
<div class="a" style="left:200px;top:178px;width:1053px;height:1px;background:#e3e3e3"></div>
<div class="a" style="left:200px;top:201px;width:1053px;height:1px;background:#e3e3e3"></div>
<div class="a" style="left:200px;top:224px;width:1053px;height:1px;background:#e3e3e3"></div>
<div class="a" style="left:200px;top:247px;width:1053px;height:1px;background:#e3e3e3"></div>
<div class="a" style="left:200px;top:270px;width:1053px;height:1px;background:#e3e3e3"></div>
<div class="a" style="left:200px;top:293px;width:1053px;height:1px;background:#e3e3e3"></div>
<div class="a" style="left:200px;top:316px;width:1053px;height:1px;background:#e3e3e3"></div>
<div class="a" style="left:200px;top:339px;width:1053px;height:1px;background:#e3e3e3"></div>
<div class="a" style="left:200px;top:362px;width:1053px;height:1px;background:#e3e3e3"></div>
<div class="a" style="left:200px;top:385px;width:1053px;height:1px;background:#e3e3e3"></div>
<div class="t b" style="left:236px;top:71px;">Č.jednací</div>
<div class="t b" style="left:307px;top:71px;">Vyřídit do</div>
<div class="t b" style="left:377px;top:71px;">Zadáno</div>
<div class="t b" style="left:448px;top:71px;">Činnost</div>
<div class="t b" style="left:652px;top:71px;">Firma</div>
<div class="t b" style="left:810px;top:71px;">Funkce</div>
<div class="t b" style="left:861px;top:71px;">Zpracovatel</div>
<div class="t b" style="left:977px;top:71px;">Výsledek</div>
<div class="t b" style="left:1071px;top:71px;">Stav</div>
<div class="t b" style="left:1140px;top:71px;">Spis</div>
<div class="t " style="left:238px;top:93px;color:#000">23-02650</div>
<div class="t " style="left:306px;top:93px;color:#f00">30.05.2023</div>
<div class="t " style="left:376px;top:93px;color:#000">29.05.2023</div>
<div class="t" style="left:450px;top:93px;width:192px;overflow:hidden;color:#000">Zpracování -Požadavek na opravu -rekla</div>
<div class="t" style="left:651px;top:93px;width:26px;text-align:right;color:#000">1</div>
<div class="t" style="left:690px;top:93px;width:111px;overflow:hidden;color:#000">Matoušková Veronika</div>
<div class="t " style="left:810px;top:93px;color:#000">TE</div>
<div class="t " style="left:862px;top:93px;color:#000">284</div>
<div class="t " style="left:886px;top:93px;color:#000">Bertlová Zdeňl</div>
<div class="t " style="left:978px;top:92px;color:#000">Odpovědět</div>
<div class="t " style="left:1070px;top:92px;color:#000">Aktivní</div>
<div class="a" style="left:1141px;top:91px;width:13px;height:13px;background:#fff;border:1px solid #333"></div>
<div class="a" style="left:1216px;top:91px;width:13px;height:13px;background:#fff;border:1px solid #555"></div>
<svg class="a" style="left:202px;top:88px;overflow:visible" width="16" height="16" viewBox="0 0 16 16"><defs><radialGradient id="gl" cx="0.42" cy="0.4" r="0.62"><stop offset="0" stop-color="#e4eefc"/><stop offset="0.45" stop-color="#7a9ee0"/><stop offset="0.8" stop-color="#2a4eb0"/><stop offset="1" stop-color="#10287a"/></radialGradient></defs><ellipse cx="8" cy="15" rx="6" ry="1" fill="#d8d0c0"/><circle cx="8" cy="7.600" r="7.700" fill="url(#gl)"/><path d="M3 5l2.500-2 2.500 0.500-0.500 2 2.500 1.500L8 9 7.500 12l-2-2L5 8 2.500 7.500zM10.500 2.500l3 1.500 0.500 3-2-0.500zM10.500 9.500l3-0.500-1 3.500z" fill="#fff" opacity="0.700"/><path d="M1.500 9Q4 12 6 13M12 3Q14 5 14.500 9" stroke="#10287a" stroke-width="1" fill="none" opacity="0.600"/></svg>
<div class="a" style="left:238px;top:115px;width:58px;height:12px;background:#d6e8fb"></div>
<div class="a" style="left:305px;top:115px;width:62px;height:12px;background:#d6e8fb"></div>
<div class="a" style="left:376px;top:115px;width:62px;height:12px;background:#d6e8fb"></div>
<div class="a" style="left:450px;top:115px;width:192px;height:12px;background:#d6e8fb"></div>
<div class="a" style="left:650px;top:115px;width:27px;height:12px;background:#d6e8fb"></div>
<div class="a" style="left:689px;top:115px;width:112px;height:12px;background:#d6e8fb"></div>
<div class="a" style="left:809px;top:115px;width:43px;height:12px;background:#d6e8fb"></div>
<div class="a" style="left:861px;top:115px;width:22px;height:12px;background:#d6e8fb"></div>
<div class="a" style="left:885px;top:115px;width:69px;height:12px;background:#d6e8fb"></div>
<div class="t " style="left:238px;top:116px;color:#000">23-21399</div>
<div class="t " style="left:306px;top:116px;color:#000">07.06.2023</div>
<div class="t " style="left:376px;top:116px;color:#000">03.06.2023</div>
<div class="t" style="left:450px;top:116px;width:192px;overflow:hidden;color:#000">Věcná správnost -Ev.faktura 20230646</div>
<div class="t" style="left:651px;top:116px;width:26px;text-align:right;color:#000">1</div>
<div class="t" style="left:690px;top:116px;width:111px;overflow:hidden;color:#000">ZK Investment Group, s</div>
<div class="t " style="left:810px;top:116px;color:#000">TE</div>
<div class="t " style="left:862px;top:116px;color:#000">284</div>
<div class="t " style="left:886px;top:116px;color:#000">Bertlová Zdeňl</div>
<div class="t " style="left:978px;top:115px;color:#000">Schválit</div>
<div class="t " style="left:1070px;top:115px;color:#000">Aktivní</div>
<div class="a" style="left:1141px;top:114px;width:13px;height:13px;background:#fff;border:1px solid #333"></div>
<div class="a" style="left:1216px;top:114px;width:13px;height:13px;background:#fff;border:1px solid #555"></div>
<svg class="a" style="left:202px;top:111px;overflow:visible" width="16" height="16" viewBox="0 0 16 16"><g transform="translate(0,1)"><rect x="0.500" y="2.500" width="13" height="11" fill="#fff" stroke="#a8a8a8"/><rect x="0" y="0.500" width="14" height="2.500" fill="#5a9ae8"/><path d="M1 6.500h12M1 10h12M5 3v10.500M9.500 3v10.500" stroke="#c0c0c0" stroke-width="0.800"/><path d="M5 7.500l2.500 3L14.500 3.500" fill="none" stroke="#2aa828" stroke-width="2.400"/></g></svg>
<div class="a" style="left:201px;top:133px;width:1051px;height:22px;background:#0078d7"></div>
<div class="t " style="left:238px;top:139px;color:#fff">23-02737</div>
<div class="t " style="left:306px;top:139px;color:#fff">08.06.2023</div>
<div class="t " style="left:376px;top:139px;color:#fff">02.06.2023</div>
<div class="t" style="left:450px;top:139px;width:192px;overflow:hidden;color:#fff">Žádost o přefakturaci VS 4402023</div>
<div class="t" style="left:651px;top:139px;width:26px;text-align:right;color:#fff">1</div>
<div class="t" style="left:690px;top:139px;width:111px;overflow:hidden;color:#fff">Matoušková Veronika</div>
<div class="t " style="left:810px;top:139px;color:#fff">TE</div>
<div class="t " style="left:862px;top:139px;color:#fff">284</div>
<div class="t " style="left:886px;top:139px;color:#fff">Bertlová Zdeňl</div>
<div class="t " style="left:978px;top:138px;color:#fff">Schválit</div>
<div class="t " style="left:1070px;top:138px;color:#fff">Aktivní</div>
<div class="a" style="left:1141px;top:136px;width:19px;height:16px;background:#fff"></div>
<div class="a" style="left:1141px;top:137px;width:13px;height:13px;background:#fff;border:1px solid #333"></div>
<svg class="a" style="left:1142px;top:138px" width="11" height="11" viewBox="0 0 11 11"><path d="M1.500 5.500L4 8.200 9.500 2.500" fill="none" stroke="#000" stroke-width="2"/></svg>
<div class="a" style="left:1216px;top:137px;width:13px;height:13px;background:#fff;border:1px solid #555"></div>
<div class="a" style="left:202px;top:134px;width:16px;height:16px;background:#fff"></div>
<svg class="a" style="left:202px;top:134px;overflow:visible" width="16" height="16" viewBox="0 0 16 16"><defs><radialGradient id="gl2" cx="0.42" cy="0.4" r="0.62"><stop offset="0" stop-color="#e4eefc"/><stop offset="0.45" stop-color="#7a9ee0"/><stop offset="0.8" stop-color="#2a4eb0"/><stop offset="1" stop-color="#10287a"/></radialGradient></defs><ellipse cx="8" cy="15" rx="6" ry="1" fill="#d8d0c0"/><circle cx="8" cy="7.600" r="7.700" fill="url(#gl2)"/><path d="M3 5l2.500-2 2.500 0.500-0.500 2 2.500 1.500L8 9 7.500 12l-2-2L5 8 2.500 7.500zM10.500 2.500l3 1.500 0.500 3-2-0.500zM10.500 9.500l3-0.500-1 3.500z" fill="#fff" opacity="0.700"/><path d="M1.500 9Q4 12 6 13M12 3Q14 5 14.500 9" stroke="#10287a" stroke-width="1" fill="none" opacity="0.600"/></svg>
<div class="a" style="left:238px;top:161px;width:58px;height:12px;background:#fbd9fb"></div>
<div class="a" style="left:305px;top:161px;width:62px;height:12px;background:#fbd9fb"></div>
<div class="a" style="left:376px;top:161px;width:62px;height:12px;background:#fbd9fb"></div>
<div class="a" style="left:450px;top:161px;width:192px;height:12px;background:#fbd9fb"></div>
<div class="a" style="left:650px;top:161px;width:27px;height:12px;background:#fbd9fb"></div>
<div class="a" style="left:689px;top:161px;width:112px;height:12px;background:#fbd9fb"></div>
<div class="a" style="left:809px;top:161px;width:43px;height:12px;background:#fbd9fb"></div>
<div class="a" style="left:861px;top:161px;width:22px;height:12px;background:#fbd9fb"></div>
<div class="a" style="left:885px;top:161px;width:69px;height:12px;background:#fbd9fb"></div>
<div class="t " style="left:238px;top:162px;color:#000">23-20925</div>
<div class="t " style="left:306px;top:162px;color:#000">12.06.2023</div>
<div class="t " style="left:376px;top:162px;color:#000">31.05.2023</div>
<div class="t" style="left:450px;top:162px;width:192px;overflow:hidden;color:#000">Na vědomí -Zpráva o provedené kontrole</div>
<div class="t" style="left:651px;top:162px;width:26px;text-align:right;color:#000">1</div>
<div class="t" style="left:690px;top:162px;width:111px;overflow:hidden;color:#000">Jiří Šebor</div>
<div class="t " style="left:810px;top:162px;color:#000">TE</div>
<div class="t " style="left:862px;top:162px;color:#000"></div>
<div class="t " style="left:886px;top:162px;color:#000"></div>
<div class="t " style="left:978px;top:161px;color:#000">Bez vyjádření</div>
<div class="t " style="left:1070px;top:161px;color:#000">Aktivní</div>
<div class="a" style="left:1141px;top:160px;width:13px;height:13px;background:#fff;border:1px solid #333"></div>
<div class="a" style="left:1216px;top:160px;width:13px;height:13px;background:#fff;border:1px solid #b4bcc4"></div>
<svg class="a" style="left:202px;top:157px;overflow:visible" width="16" height="16" viewBox="0 0 16 16"><g transform="translate(0,0.700)"><path d="M0.500 10.500h3v2.500h9v-2.500h3v5h-15z" fill="url(#tray)" stroke="#d08a10" stroke-width="1"/><path d="M5.500 1.500h5v3.500h2.500l-5 5.500-5-5.500h2.500z" fill="url(#grn)" stroke="#2a9a18" stroke-width="0.700"/></g></svg>
<div class="t " style="left:238px;top:185px;color:#000">23-02302</div>
<div class="t " style="left:306px;top:185px;color:#000">13.06.2023</div>
<div class="t " style="left:376px;top:185px;color:#000">29.05.2023</div>
<div class="t" style="left:450px;top:185px;width:192px;overflow:hidden;color:#000">Převzetí bytu -Vrácení bytu</div>
<div class="t" style="left:651px;top:185px;width:26px;text-align:right;color:#000">1</div>
<div class="t" style="left:690px;top:185px;width:111px;overflow:hidden;color:#000"></div>
<div class="t " style="left:810px;top:185px;color:#000">TE</div>
<div class="t " style="left:862px;top:185px;color:#000">284</div>
<div class="t " style="left:886px;top:185px;color:#000">Bertlová Zdeňl</div>
<div class="t " style="left:978px;top:184px;color:#000">Bez vyjádření</div>
<div class="t " style="left:1070px;top:184px;color:#000">Aktivní</div>
<div class="a" style="left:1141px;top:183px;width:13px;height:13px;background:#fff;border:1px solid #333"></div>
<div class="a" style="left:1216px;top:183px;width:13px;height:13px;background:#fff;border:1px solid #b4bcc4"></div>
<svg class="a" style="left:202px;top:180px;overflow:visible" width="16" height="16" viewBox="0 0 16 16"><g transform="translate(0,0)"><g transform="scale(0.850)"><circle cx="5" cy="3.500" r="2.600" fill="#f4d8b0" stroke="#a06820" stroke-width="0.600"/><path d="M2.500 3Q3 0.300 6 0.800Q8 1.500 7.500 3.500Q6 2 2.500 3z" fill="#b07820"/><path d="M0.500 11.500Q0.500 7 5 7Q8 7 8.500 10v1.500z" fill="#c4ccec" stroke="#7880b0" stroke-width="0.600"/><circle cx="11" cy="8" r="2.500" fill="#f4d0a8"/><path d="M8 10Q7.500 4.500 11 4.800Q14.500 4.800 14 10Q13 7 11 6.500Q9 7 8 10z" fill="#c07818"/><path d="M6 15.500Q6 11 11 11Q16 11 16 15.500z" fill="#101010"/><path d="M10 11l1 2.500 1-2.500z" fill="#fff"/></g></g></svg>
<div class="t " style="left:238px;top:208px;color:#000">23-02248</div>
<div class="t " style="left:306px;top:208px;color:#000">14.06.2023</div>
<div class="t " style="left:376px;top:208px;color:#000">24.05.2023</div>
<div class="t" style="left:450px;top:208px;width:192px;overflow:hidden;color:#000">Přehled školení -Výstup zaměstnance Be</div>
<div class="t" style="left:651px;top:208px;width:26px;text-align:right;color:#000">1</div>
<div class="t" style="left:690px;top:208px;width:111px;overflow:hidden;color:#000"></div>
<div class="t " style="left:810px;top:208px;color:#000">TE</div>
<div class="t " style="left:862px;top:208px;color:#000">284</div>
<div class="t " style="left:886px;top:208px;color:#000">Bertlová Zdeňl</div>
<div class="t " style="left:978px;top:207px;color:#000">Schválit</div>
<div class="t " style="left:1070px;top:207px;color:#000">Aktivní</div>
<div class="a" style="left:1141px;top:206px;width:13px;height:13px;background:#fff;border:1px solid #333"></div>
<div class="a" style="left:1216px;top:206px;width:13px;height:13px;background:#fff;border:1px solid #b4bcc4"></div>
<svg class="a" style="left:202px;top:203px;overflow:visible" width="16" height="16" viewBox="0 0 16 16"><g transform="translate(0,0)"><g transform="scale(0.850)"><circle cx="5" cy="3.500" r="2.600" fill="#f4d8b0" stroke="#a06820" stroke-width="0.600"/><path d="M2.500 3Q3 0.300 6 0.800Q8 1.500 7.500 3.500Q6 2 2.500 3z" fill="#b07820"/><path d="M0.500 11.500Q0.500 7 5 7Q8 7 8.500 10v1.500z" fill="#c4ccec" stroke="#7880b0" stroke-width="0.600"/><circle cx="11" cy="8" r="2.500" fill="#f4d0a8"/><path d="M8 10Q7.500 4.500 11 4.800Q14.500 4.800 14 10Q13 7 11 6.500Q9 7 8 10z" fill="#c07818"/><path d="M6 15.500Q6 11 11 11Q16 11 16 15.500z" fill="#101010"/><path d="M10 11l1 2.500 1-2.500z" fill="#fff"/></g></g></svg>
<div class="t " style="left:238px;top:231px;color:#000">23-02343</div>
<div class="t " style="left:306px;top:231px;color:#000">30.06.2023</div>
<div class="t " style="left:376px;top:231px;color:#000">31.05.2023</div>
<div class="t" style="left:450px;top:231px;width:192px;overflow:hidden;color:#000">nebydlící členi - vystoupení</div>
<div class="t" style="left:651px;top:231px;width:26px;text-align:right;color:#000">1</div>
<div class="t" style="left:690px;top:231px;width:111px;overflow:hidden;color:#000"></div>
<div class="t " style="left:810px;top:231px;color:#000">TE</div>
<div class="t " style="left:862px;top:231px;color:#000">284</div>
<div class="t " style="left:886px;top:231px;color:#000">Bertlová Zdeňl</div>
<div class="t " style="left:978px;top:230px;color:#000">Bez vyjádření</div>
<div class="t " style="left:1070px;top:230px;color:#000">Aktivní</div>
<div class="a" style="left:1141px;top:229px;width:13px;height:13px;background:#fff;border:1px solid #333"></div>
<div class="a" style="left:1216px;top:229px;width:13px;height:13px;background:#fff;border:1px solid #b4bcc4"></div>
<svg class="a" style="left:202px;top:226px;overflow:visible" width="16" height="16" viewBox="0 0 16 16"><defs><radialGradient id="inf" cx="0.4" cy="0.3" r="0.750"><stop offset="0" stop-color="#a8dcff"/><stop offset="0.600" stop-color="#2a8af0"/><stop offset="1" stop-color="#1060d0"/></radialGradient></defs><ellipse cx="8" cy="14.800" rx="5.500" ry="1" fill="#d0d0d0"/><circle cx="8" cy="8" r="7" fill="url(#inf)" stroke="#2a78d8" stroke-width="0.600"/><rect x="7" y="3.500" width="2" height="2" fill="#fff"/><rect x="7" y="6.500" width="2" height="5.500" fill="#fff"/></svg>
<div class="a" style="left:963px;top:92px;width:2px;height:7px;background:#f00000"></div>
<div class="a" style="left:963px;top:101px;width:2px;height:2px;background:#f00000"></div>
<svg class="a" style="left:1177px;top:179px" width="13" height="14" viewBox="0 0 13 14"><rect x="5" y="0" width="3" height="1.500" fill="#222"/><path d="M10 2.500l1.200 1.200" stroke="#222" stroke-width="1"/><circle cx="6.500" cy="8" r="5.200" fill="#fff" stroke="#222" stroke-width="1.100"/><path d="M6.500 5v3.500" stroke="#222" stroke-width="1"/></svg>
<svg class="a" style="left:1195px;top:180px" width="13" height="13" viewBox="0 0 13 13"><rect width="13" height="13" fill="#b8b8b8"/><circle cx="6.500" cy="6.500" r="5.200" fill="#f4f4f4" stroke="#e01818" stroke-width="2"/><path d="M4.500 9V5.500M6 9V3.500M7.500 9V3.500M9 9V5" stroke="#d8c8c0" stroke-width="1.200"/></svg>
<div class="t " style="left:328px;top:409px;font-style:italic;font-size:10px;letter-spacing:-0.22px">Do celk.zpracování zbývá 27</div>
<div class="t b" style="left:702px;top:412px;color:#21a843">Žádost G5i- Informace</div>
<div class="t " style="left:649px;top:443px;">Zadáno</div>
<div class="fld" style="left:724px;top:440px;width:78px;height:18px"></div>
<div class="t " style="left:726px;top:443px;">02.06.2023</div>
<div class="t " style="left:808px;top:443px;">Priorita</div>
<div class="fld" style="left:846px;top:440px;width:29px;height:18px"></div>
<div class="t " style="left:861.5px;top:443px;">99</div>
<div class="t " style="left:724px;top:473px;">Dům</div>
<div class="fld" style="left:752px;top:468px;width:29px;height:18px"></div>
<div class="t " style="left:754px;top:471px;">0043</div>
<div class="a" style="left:1141px;top:412px;width:115px;height:19px;background:#fff;border:1px solid #7a7a7a"></div>
<svg class="a" style="left:1244px;top:420px" width="8" height="6" viewBox="0 0 8 6"><path d="M0.700 0.700L4 4 7.300 0.700" fill="none" stroke="#505050" stroke-width="1.900"/></svg>
<div class="a" style="left:1141px;top:435px;width:115px;height:19px;background:#fff;border:1px solid #7a7a7a"></div>
<svg class="a" style="left:1244px;top:443px" width="8" height="6" viewBox="0 0 8 6"><path d="M0.700 0.700L4 4 7.300 0.700" fill="none" stroke="#505050" stroke-width="1.900"/></svg>
<div class="a" style="left:1141px;top:458px;width:115px;height:19px;background:#fff;border:1px solid #7a7a7a"></div>
<div class="t " style="left:1147px;top:462px;">vše</div>
<svg class="a" style="left:1244px;top:466px" width="8" height="6" viewBox="0 0 8 6"><path d="M0.700 0.700L4 4 7.300 0.700" fill="none" stroke="#505050" stroke-width="1.900"/></svg>
<div class="a" style="left:1066px;top:419px;width:27px;height:22px;background:#efefef"></div>
<svg class="a" style="left:1072px;top:420px;overflow:visible" width="16" height="19" viewBox="0 0 16 19"><path d="M5.500 10V2.800Q5.500 1.500 6.700 1.500Q7.800 1.500 7.800 2.800V1.800Q7.800 0.500 9.100 0.500Q10.300 0.500 10.300 1.800V2.500Q10.300 1.300 11.500 1.300Q12.700 1.300 12.700 2.600V4Q12.700 3 13.700 3Q14.700 3 14.700 4.200V13Q14.700 18.500 10 18.500Q7 18.500 5 16L0.700 10.800Q0 9.500 1 9Q2 8.600 3 9.700L5.500 12.300z" fill="#f6d8cc" stroke="#585858" stroke-width="1"/><path d="M7.800 3v6M10.300 3v6M12.700 4.500v4.500M8 10.500h4" stroke="#585858" stroke-width="0.700" fill="none"/></svg>
<div class="btn" style="left:1047px;top:452px;width:68px;height:20px;"><span style="top:3px">Značky</span></div>
<div class="btn" style="left:1145px;top:606px;width:96px;height:20px;"><span style="top:3px">Zpracuj žádost</span></div>
<div class="a" style="left:206px;top:486px;width:326px;height:198px;background:#fff;border:1px solid #828790"></div>
<div class="a" style="left:208px;top:488px;width:301px;height:18px;background:#fbfbfb"></div>
<div class="t b" style="left:210px;top:492px;">Položka žádosti</div>
<div class="t b" style="left:329px;top:492px;">Hodnota</div>
<div class="a" style="left:207px;top:506px;width:306px;height:1px;background:#e3e3e3"></div>
<div class="a" style="left:207px;top:527px;width:306px;height:1px;background:#e3e3e3"></div>
<div class="a" style="left:207px;top:548px;width:306px;height:1px;background:#e3e3e3"></div>
<div class="a" style="left:207px;top:569px;width:306px;height:1px;background:#e3e3e3"></div>
<div class="a" style="left:207px;top:590px;width:306px;height:1px;background:#e3e3e3"></div>
<div class="a" style="left:207px;top:611px;width:306px;height:1px;background:#e3e3e3"></div>
<div class="a" style="left:207px;top:632px;width:306px;height:1px;background:#e3e3e3"></div>
<div class="a" style="left:207px;top:653px;width:306px;height:1px;background:#e3e3e3"></div>
<div class="a" style="left:207px;top:674px;width:306px;height:1px;background:#e3e3e3"></div>
<div class="a" style="left:326px;top:488px;width:1px;height:195px;background:#e3e3e3"></div>
<div class="a" style="left:509px;top:488px;width:1px;height:18px;background:#e3e3e3"></div>
<div class="a" style="left:208px;top:507px;width:305px;height:20px;border:1px solid #000;background:#fff"></div>
<div class="t " style="left:213px;top:512px;">Podávám k datu</div>
<div class="t " style="left:328px;top:512px;">15.02.2018</div>
<div class="a" style="left:513px;top:487px;width:17px;height:196px;background:#fff;border-left:1px solid #c4c8cc;border-right:1px solid #c4c8cc"></div>
<div class="a" style="left:513px;top:487px;width:17px;height:18px;background:#fff;border:1px solid #c4c8cc"></div>
<div class="a" style="left:513px;top:665px;width:17px;height:17px;background:#fff;border:1px solid #c4c8cc"></div>
<svg class="a" style="left:517px;top:495px" width="8" height="6" viewBox="0 0 8 6"><path d="M0.500 4.800L4 1.300 7.500 4.800" fill="none" stroke="#606060" stroke-width="1.400"/></svg>
<svg class="a" style="left:517px;top:671px" width="8" height="6" viewBox="0 0 8 6"><path d="M0.500 1.200L4 4.700 7.500 1.200" fill="none" stroke="#606060" stroke-width="1.400"/></svg>
<div class="t " style="left:542px;top:495px;">Podrobnosti a odůvodnění</div>
<div class="fld" style="left:542px;top:514px;width:298px;height:84px"></div>
<div class="t " style="left:543px;top:516px;letter-spacing:-0.22px">Dobrý den, prosím o info, kam se obrátit s tím, že na svém</div>
<div class="t " style="left:543px;top:529px;letter-spacing:-0.167px">uživatelském účtu mám informace k bytu č. 12 SA 71 (pan Jiří</div>
<div class="t " style="left:543px;top:542px;letter-spacing:-0.2px">Kraus), ale měl bych mít náhled k bytu č. 5 tedy k mému bytu .</div>
<div class="t " style="left:543px;top:555px;letter-spacing:-0.146px">Děkuji předem Jaroslav Pilař 724625555</div>
<div class="t " style="left:542px;top:613px;">Vyjádření zpracovatele</div>
<div class="fld" style="left:542px;top:626px;width:298px;height:65px;overflow:hidden"></div>
<div class="t " style="left:543px;top:628px;letter-spacing:-0.11px">Vaši připomínku předáváme ke zpracování správci sítě -</div>
<div class="t " style="left:543px;top:641px;letter-spacing:-0.15px">systémovému technikovi.</div>
<div class="t " style="left:543px;top:667px;letter-spacing:-0.15px">Systémový technik:</div>
<div class="t" style="left:543px;top:680px;height:11px;overflow:hidden;letter-spacing:-0.15px">Vážený pane Pilaři,</div>
<div class="a" style="left:625px;top:666px;width:1px;height:13px;background:#000"></div>
<div class="t " style="left:203px;top:722px;">Typ oběhu:</div>
<div class="t " style="left:262px;top:721px;">EOTU</div>
<div class="t " style="left:318px;top:721px;">Přefakturace</div>
<div class="btn" style="left:459px;top:735px;width:82px;height:21px;"><span style="top:4px">Pošli dál</span></div>
<div class="btn" style="left:757px;top:707px;width:82px;height:21px;"><span style="top:4px"><u>F</u>aktura</span></div>
<div class="btn" style="left:851px;top:707px;width:82px;height:21px;"><span style="top:4px"><u>S</u>ouvisející ev.</span></div>
<div class="btn" style="left:1038px;top:707px;width:82px;height:21px;background:#f4f4f4;border-color:#bcc4cc;color:#8c8c8c"><span style="top:4px">Dokument</span></div>
<div class="btn" style="left:757px;top:735px;width:82px;height:21px;"><span style="top:4px"><u>V</u>rať zpět</span></div>
<div class="btn" style="left:851px;top:735px;width:82px;height:21px;"><span style="top:4px">Zruš přidělení</span></div>
<div class="btn" style="left:946px;top:735px;width:82px;height:21px;"><span style="top:4px"><u>M</u>apa činností</span></div>
<div class="btn" style="left:1038px;top:735px;width:82px;height:21px;"><span style="top:4px"><u>P</u>řehled činností</span></div>
<div class="btn" style="left:1145px;top:735px;width:96px;height:21px;"><span style="top:4px"><u>Z</u>avři</span></div>
<div class="a" style="left:1px;top:763px;width:1264px;height:2px;background:#fbfbfb"></div>
<div class="a" style="left:830px;top:766px;width:168px;height:17px;border:1px solid;border-color:#a0a0a0 #fff #fff #a0a0a0"></div>
<div class="a" style="left:1000px;top:766px;width:107px;height:17px;border:1px solid;border-color:#a0a0a0 #fff #fff #a0a0a0"></div>
<div class="a" style="left:1110px;top:766px;width:43px;height:17px;border:1px solid;border-color:#a0a0a0 #fff #fff #a0a0a0"></div>
<div class="a" style="left:1156px;top:766px;width:57px;height:17px;border:1px solid;border-color:#a0a0a0 #fff #fff #a0a0a0"></div>
<div class="a" style="left:1216px;top:766px;width:48px;height:17px;border:1px solid;border-color:#a0a0a0 #fff #fff #a0a0a0"></div>
<div class="t b" style="left:1002px;top:769px;letter-spacing:-0.2px">Query</div>
<div class="t b" style="left:1219px;top:769px;letter-spacing:0.3px">INS</div>
<svg class="a" style="left:1251px;top:770px" width="13" height="13" viewBox="0 0 13 13"><path d="M1 13L13 1M5 13L13 5M9 13L13 9" stroke="#a0a0a0" stroke-width="1.200"/><path d="M2 13L13 2M6 13L13 6M10 13L13 10" stroke="#fff" stroke-width="0.900"/></svg>
</div></body></html>
